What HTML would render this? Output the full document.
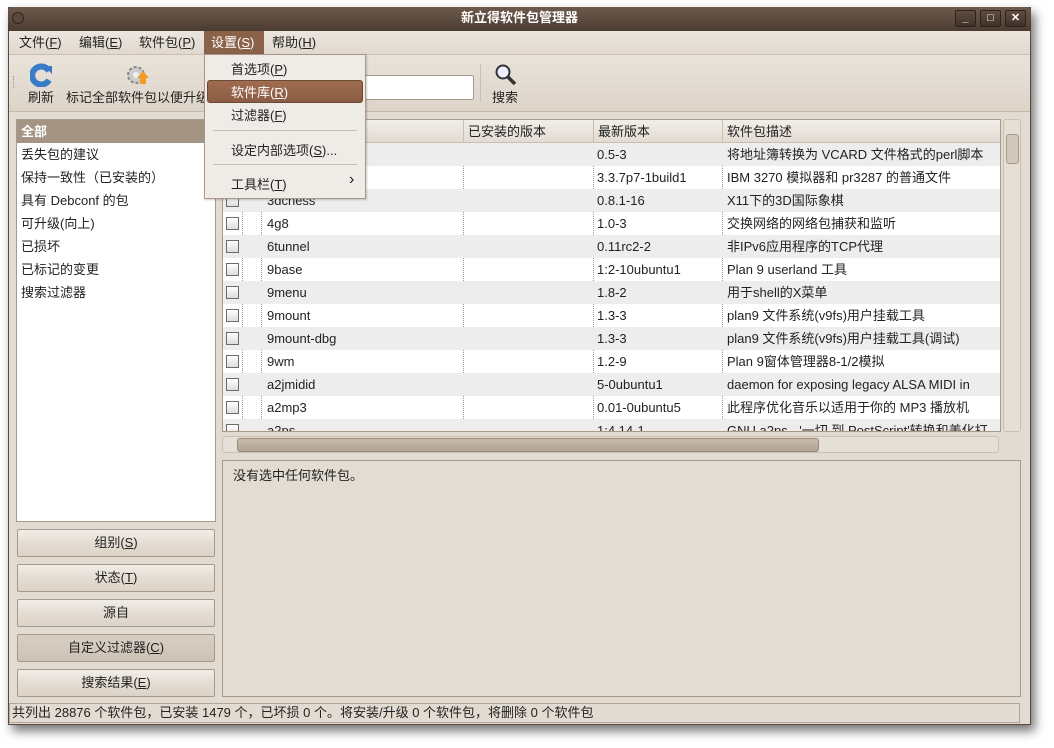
<!DOCTYPE html>
<html><head><meta charset="utf-8"><style>
*{box-sizing:border-box;margin:0;padding:0}
body{width:1054px;height:748px;background:#fff;position:relative;overflow:hidden;font-family:"Liberation Sans","Noto Sans CJK SC",sans-serif;font-size:13px;color:#222}
.abs{position:absolute}
.win{left:8px;top:7px;width:1023px;height:718px;background:#e2dbd1;box-shadow:4px 6px 10px rgba(0,0,0,.55);border:1px solid #5a4a3c}
.title{left:8px;top:7px;width:1023px;height:24px;background:linear-gradient(#6e5a4c,#4b3c31);color:#fff;font-weight:bold;font-size:13px;text-align:center;line-height:22px;border-radius:4px 4px 0 0}
.wb{top:10px;width:21px;height:17px;border:1px solid #2e241d;background:linear-gradient(#5f4d40,#3f3128);border-radius:2px;color:#fff;font-size:11px;text-align:center;line-height:15px;font-weight:bold}
.menubar{left:9px;top:31px;width:1021px;height:24px;background:linear-gradient(#ebe5de,#e1d9cf);border-bottom:1px solid #cbbfb1}
.mi{top:31px;height:23px;line-height:23px;padding:0 7px}
.tool{left:9px;top:55px;width:1021px;height:57px;background:linear-gradient(#e9e3db,#ddd4c9);border-bottom:1px solid #c5b9aa}
.list{left:16px;top:119px;width:200px;height:403px;background:#fff;border:1px solid #a89a8a}
.list div{height:23px;line-height:23px;padding-left:4px}
.tbl{left:222px;top:119px;width:779px;height:313px;background:#fff;border:1px solid #a89a8a;overflow:hidden}
.hdr{height:23px;background:linear-gradient(#f2eee9,#e2dbd2);border-bottom:1px solid #c9bfb2;position:relative}
.hdr span{position:absolute;top:0;line-height:23px;padding-left:4px;border-left:1px solid #c9bfb2}
.row{height:23px;position:relative;line-height:23px}
.row:nth-child(even){background:#ededed}
.row span{position:absolute;top:0}
.cb{left:3px;top:5px!important;width:13px;height:13px;border:1px solid #6b6b6b;background:linear-gradient(#fff,#ddd)}
.dl{position:absolute;top:0;bottom:0;border-left:1px dotted #999}
.btn{left:17px;width:198px;height:28px;border:1px solid #a89a8a;border-radius:2px;background:linear-gradient(#f1ede8,#e5ddd3 50%,#dcd3c8);text-align:center;line-height:26px}
.menu{left:204px;top:54px;width:162px;height:145px;background:#efebe6;border:1px solid #a8978a;box-shadow:1px 1px 2px rgba(0,0,0,.2)}
.menu div{position:absolute;left:26px}
u{text-decoration:underline}
</style></head><body>
<div class="abs win"></div>
<div class="abs title">新立得软件包管理器</div>
<div class="abs" style="left:12px;top:12px;width:12px;height:12px;border-radius:50%;border:1px solid #2e241d;background:#5a493c"></div>
<div class="abs wb" style="left:955px">_</div>
<div class="abs wb" style="left:980px">□</div>
<div class="abs wb" style="left:1005px">✕</div>
<div class="abs menubar"></div>
<div class="abs mi" style="left:12px">文件(<u>F</u>)</div>
<div class="abs mi" style="left:72px">编辑(<u>E</u>)</div>
<div class="abs mi" style="left:132px">软件包(<u>P</u>)</div>
<div class="abs mi" style="left:204px;width:60px;background:#8a6149;color:#fff">设置(<u>S</u>)</div>
<div class="abs mi" style="left:265px">帮助(<u>H</u>)</div>
<div class="abs tool"></div>
<div class="abs" style="left:13px;top:76px;width:3px;height:12px;border-left:1px dotted #998"></div>
<svg class="abs" style="left:30px;top:63px" width="24" height="24" viewBox="0 0 24 24"><path d="M19 8A9 9 0 1 0 19 17" stroke="#3a7bc8" stroke-width="6" fill="none"/><path d="M14 3l8 0 0 8z" fill="#3a7bc8"/></svg>
<div class="abs" style="left:28px;top:87px">刷新</div>
<svg class="abs" style="left:125px;top:63px" width="26" height="24" viewBox="0 0 26 24"><circle cx="11" cy="12" r="8" fill="#ccc" stroke="#888" stroke-width="2" stroke-dasharray="3 2"/><circle cx="11" cy="12" r="3" fill="#eee"/><path d="M18 8l6 7h-3v6h-6v-6h-3z" fill="#f39a25"/></svg>
<div class="abs" style="left:66px;top:87px">标记全部软件包以便升级</div>
<div class="abs" style="left:364px;top:75px;width:110px;height:25px;background:#fff;border:1px solid #a89a8a;border-radius:2px"></div>
<div class="abs" style="left:480px;top:64px;height:38px;border-left:1px solid #cbbfb1"></div>
<svg class="abs" style="left:494px;top:63px" width="24" height="24" viewBox="0 0 24 24"><circle cx="9" cy="9" r="6.5" fill="#eef" stroke="#333" stroke-width="2"/><path d="M14 14l7 7" stroke="#333" stroke-width="3.5"/></svg>
<div class="abs" style="left:492px;top:87px">搜索</div>

<div class="abs list">
<div style="background:#a39483;color:#fff;font-weight:bold">全部</div>
<div>丢失包的建议</div><div>保持一致性（已安装的）</div><div>具有 Debconf 的包</div><div>可升级(向上)</div><div>已损坏</div><div>已标记的变更</div><div>搜索过滤器</div>
</div>

<div class="abs tbl">
<div class="hdr"><span style="left:0;border:0">&nbsp;</span><span style="left:240px">已安装的版本</span><span style="left:370px">最新版本</span><span style="left:499px">软件包描述</span></div>
<div style="position:relative">
<div class="dl" style="left:19px;height:300px"></div><div class="dl" style="left:38px;height:300px"></div><div class="dl" style="left:240px;height:300px"></div><div class="dl" style="left:370px;height:300px"></div><div class="dl" style="left:499px;height:300px"></div>
<div class="row"><span class="cb"></span><span style="left:44px">3270</span><span style="left:374px">0.5-3</span><span style="left:504px">将地址簿转换为 VCARD 文件格式的perl脚本</span></div>
<div class="row"><span class="cb"></span><span style="left:44px">3270</span><span style="left:374px">3.3.7p7-1build1</span><span style="left:504px">IBM 3270 模拟器和 pr3287 的普通文件</span></div>
<div class="row"><span class="cb"></span><span style="left:44px">3dchess</span><span style="left:374px">0.8.1-16</span><span style="left:504px">X11下的3D国际象棋</span></div>
<div class="row"><span class="cb"></span><span style="left:44px">4g8</span><span style="left:374px">1.0-3</span><span style="left:504px">交换网络的网络包捕获和监听</span></div>
<div class="row"><span class="cb"></span><span style="left:44px">6tunnel</span><span style="left:374px">0.11rc2-2</span><span style="left:504px">非IPv6应用程序的TCP代理</span></div>
<div class="row"><span class="cb"></span><span style="left:44px">9base</span><span style="left:374px">1:2-10ubuntu1</span><span style="left:504px">Plan 9 userland 工具</span></div>
<div class="row"><span class="cb"></span><span style="left:44px">9menu</span><span style="left:374px">1.8-2</span><span style="left:504px">用于shell的X菜单</span></div>
<div class="row"><span class="cb"></span><span style="left:44px">9mount</span><span style="left:374px">1.3-3</span><span style="left:504px">plan9 文件系统(v9fs)用户挂载工具</span></div>
<div class="row"><span class="cb"></span><span style="left:44px">9mount-dbg</span><span style="left:374px">1.3-3</span><span style="left:504px">plan9 文件系统(v9fs)用户挂载工具(调试)</span></div>
<div class="row"><span class="cb"></span><span style="left:44px">9wm</span><span style="left:374px">1.2-9</span><span style="left:504px">Plan 9窗体管理器8-1/2模拟</span></div>
<div class="row"><span class="cb"></span><span style="left:44px">a2jmidid</span><span style="left:374px">5-0ubuntu1</span><span style="left:504px;white-space:nowrap">daemon for exposing legacy ALSA MIDI in</span></div>
<div class="row"><span class="cb"></span><span style="left:44px">a2mp3</span><span style="left:374px">0.01-0ubuntu5</span><span style="left:504px">此程序优化音乐以适用于你的 MP3 播放机</span></div>
<div class="row"><span class="cb"></span><span style="left:44px">a2ps</span><span style="left:374px">1:4.14-1</span><span style="left:504px;white-space:nowrap">GNU a2ps - '一切 到 PostScript'转换和美化打</span></div>
</div></div>
<div class="abs" style="left:1003px;top:119px;width:18px;height:313px;background:#e6dfd6;border:1px solid #c9bfb2;border-radius:3px"></div>
<div class="abs" style="left:1006px;top:134px;width:13px;height:30px;background:#d3c8bb;border:1px solid #a89a8a;border-radius:3px"></div>
<div class="abs" style="left:222px;top:436px;width:777px;height:17px;background:#e6dfd6;border:1px solid #c9bfb2;border-radius:3px"></div>
<div class="abs" style="left:237px;top:438px;width:582px;height:14px;background:linear-gradient(#c9bcad,#b1a393);border:1px solid #9a8b7b;border-radius:3px"></div>
<div class="abs" style="left:222px;top:460px;width:799px;height:237px;border:1px solid #a89a8a;background:#e3dcd3"></div>
<div class="abs" style="left:233px;top:465px">没有选中任何软件包。</div>
<div class="abs btn" style="top:529px">组别(<u>S</u>)</div>
<div class="abs btn" style="top:564px">状态(<u>T</u>)</div>
<div class="abs btn" style="top:599px">源自</div>
<div class="abs btn" style="top:634px;background:linear-gradient(#d8cfc4,#cdc2b5)">自定义过滤器(<u>C</u>)</div>
<div class="abs btn" style="top:669px">搜索结果(<u>E</u>)</div>
<div class="abs" style="left:9px;top:703px;width:1011px;height:20px;border:1px solid #b3a696;line-height:18px;padding-left:2px">共列出 28876 个软件包，已安装 1479 个，已坏损 0 个。将安装/升级 0 个软件包，将删除 0 个软件包</div>

<div class="abs menu">
<div style="top:4px">首选项(<u>P</u>)</div>
<div style="left:2px;top:25px;width:156px;height:23px;background:linear-gradient(#a06c50,#8a5c43);border:1px solid #6e4a36;border-radius:3px"></div>
<div style="top:27px;color:#fff">软件库(<u>R</u>)</div>
<div style="top:50px">过滤器(<u>F</u>)</div>
<div style="left:8px;top:75px;width:144px;border-top:1px solid #cbbfb1"></div>
<div style="top:85px">设定内部选项(<u>S</u>)...</div>
<div style="left:8px;top:109px;width:144px;border-top:1px solid #cbbfb1"></div>
<div style="top:119px">工具栏(<u>T</u>)</div>
<div style="left:144px;top:116px;font-size:16px">›</div>
</div>
</body></html>
